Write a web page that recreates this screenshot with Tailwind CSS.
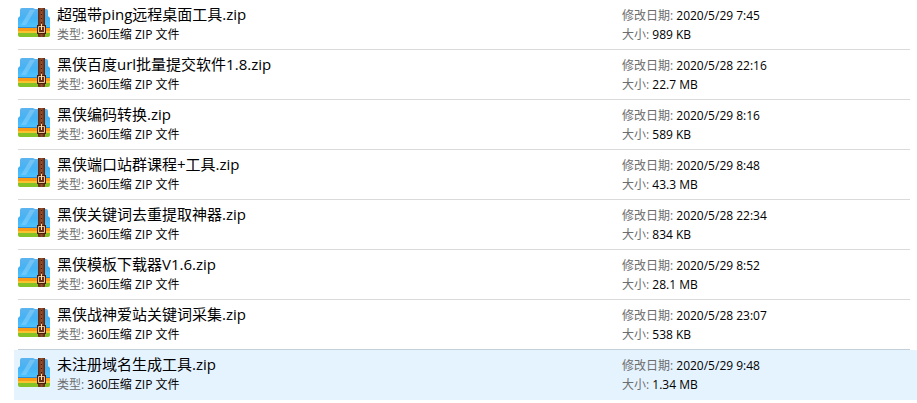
<!DOCTYPE html>
<html lang="zh-CN">
<head>
    <meta charset="UTF-8">
    <meta name="viewport" content="width=device-width, initial-scale=1.0">
    <title>文件</title>
    <script src="https://cdn.jsdelivr.net/npm/@tailwindcss/browser@4"></script>
</head>
<body class="bg-white text-black font-['Open_Sans','Noto_Sans_CJK_SC',sans-serif]">
    <!-- zip file icon -->
    <svg class="absolute size-0" aria-hidden="true">
        <defs>
            <linearGradient id="blue" x1="0" y1="0" x2="0" y2="1">
                <stop offset="0" stop-color="#5cb4ee" />
                <stop offset="0.5" stop-color="#45b2f4" />
                <stop offset="1" stop-color="#4cc4ff" />
            </linearGradient>
            <linearGradient id="strap" x1="0" y1="0" x2="1" y2="0">
                <stop offset="0" stop-color="#5c2812" />
                <stop offset="0.5" stop-color="#94502c" />
                <stop offset="1" stop-color="#5a2510" />
            </linearGradient>
        </defs>
        <symbol id="zip" viewBox="0 0 32 30">
            <path d="M0 22h32v5a2 2 0 0 1-2 2H2a2 2 0 0 1-2-2z" fill="#84c225" />
            <path d="M0 20h32v4H0z" fill="#fb9a14" />
            <path d="M0 23h32v2H0z" fill="#f6c42e" />
            <path d="M2 8V2a2 2 0 0 1 2-2h11l2 1h11a2 2 0 0 1 2 2v5l2 2v10H0V10z" fill="url(#blue)" />
            <path d="M3 17L12 2h5L8 17z" fill="#a4dcfb" opacity="0.4" />
            <path d="M0 19h32v1H0z" fill="#2b8fd8" />
            <path d="M20 0h7v28a1 1 0 0 1-1 1h-5a1 1 0 0 1-1-1z" fill="url(#strap)" />
            <path d="M23 2h1v1h-1zM23 6h1v1h-1zM23 10h1v1h-1zM23 14h1v1h-1z" fill="#3c1608" />
            <path d="M19 17h9v9h-9z" fill="#4a1d0c" />
            <path d="M20.500 18.500h6v6h-6z" fill="#6b3016" stroke="#ecc494" />
            <path d="M23 16h1v6h-1z" fill="#fbe3b8" />
        </symbol>
    </svg>

    <main>
        <ul class="pl-[14px]">
            <li class="pl-1 pr-[7px]">
                <div class="flex h-[50px] border-b border-[#dadada]">
                    <svg class="w-8 h-[30px] mt-2 mr-[7px] shrink-0"><use href="#zip" /></svg>
                    <div class="grow pt-[3px]">
                        <h2 class="text-[15px] leading-[22px]">超强带ping远程桌面工具.zip</h2>
                        <p class="text-[12px] leading-[20px]"><span class="text-[#6d6d6d]">类型:</span> 360压缩 ZIP 文件</p>
                    </div>
                    <div class="w-[288px] shrink-0 pt-[6px] text-[12px] leading-[19px]">
                        <p><span class="text-[#6d6d6d]">修改日期:</span> 2020/5/29 7:45</p>
                        <p><span class="text-[#6d6d6d]">大小:</span> 989 KB</p>
                    </div>
                </div>
            </li>
            <li class="pl-1 pr-[7px]">
                <div class="flex h-[50px] border-b border-[#dadada]">
                    <svg class="w-8 h-[30px] mt-2 mr-[7px] shrink-0"><use href="#zip" /></svg>
                    <div class="grow pt-[3px]">
                        <h2 class="text-[15px] leading-[22px]">黑侠百度url批量提交软件1.8.zip</h2>
                        <p class="text-[12px] leading-[20px]"><span class="text-[#6d6d6d]">类型:</span> 360压缩 ZIP 文件</p>
                    </div>
                    <div class="w-[288px] shrink-0 pt-[6px] text-[12px] leading-[19px]">
                        <p><span class="text-[#6d6d6d]">修改日期:</span> 2020/5/28 22:16</p>
                        <p><span class="text-[#6d6d6d]">大小:</span> 22.7 MB</p>
                    </div>
                </div>
            </li>
            <li class="pl-1 pr-[7px]">
                <div class="flex h-[50px] border-b border-[#dadada]">
                    <svg class="w-8 h-[30px] mt-2 mr-[7px] shrink-0"><use href="#zip" /></svg>
                    <div class="grow pt-[3px]">
                        <h2 class="text-[15px] leading-[22px]">黑侠编码转换.zip</h2>
                        <p class="text-[12px] leading-[20px]"><span class="text-[#6d6d6d]">类型:</span> 360压缩 ZIP 文件</p>
                    </div>
                    <div class="w-[288px] shrink-0 pt-[6px] text-[12px] leading-[19px]">
                        <p><span class="text-[#6d6d6d]">修改日期:</span> 2020/5/29 8:16</p>
                        <p><span class="text-[#6d6d6d]">大小:</span> 589 KB</p>
                    </div>
                </div>
            </li>
            <li class="pl-1 pr-[7px]">
                <div class="flex h-[50px] border-b border-[#dadada]">
                    <svg class="w-8 h-[30px] mt-2 mr-[7px] shrink-0"><use href="#zip" /></svg>
                    <div class="grow pt-[3px]">
                        <h2 class="text-[15px] leading-[22px]">黑侠端口站群课程+工具.zip</h2>
                        <p class="text-[12px] leading-[20px]"><span class="text-[#6d6d6d]">类型:</span> 360压缩 ZIP 文件</p>
                    </div>
                    <div class="w-[288px] shrink-0 pt-[6px] text-[12px] leading-[19px]">
                        <p><span class="text-[#6d6d6d]">修改日期:</span> 2020/5/29 8:48</p>
                        <p><span class="text-[#6d6d6d]">大小:</span> 43.3 MB</p>
                    </div>
                </div>
            </li>
            <li class="pl-1 pr-[7px]">
                <div class="flex h-[50px] border-b border-[#dadada]">
                    <svg class="w-8 h-[30px] mt-2 mr-[7px] shrink-0"><use href="#zip" /></svg>
                    <div class="grow pt-[3px]">
                        <h2 class="text-[15px] leading-[22px]">黑侠关键词去重提取神器.zip</h2>
                        <p class="text-[12px] leading-[20px]"><span class="text-[#6d6d6d]">类型:</span> 360压缩 ZIP 文件</p>
                    </div>
                    <div class="w-[288px] shrink-0 pt-[6px] text-[12px] leading-[19px]">
                        <p><span class="text-[#6d6d6d]">修改日期:</span> 2020/5/28 22:34</p>
                        <p><span class="text-[#6d6d6d]">大小:</span> 834 KB</p>
                    </div>
                </div>
            </li>
            <li class="pl-1 pr-[7px]">
                <div class="flex h-[50px] border-b border-[#dadada]">
                    <svg class="w-8 h-[30px] mt-2 mr-[7px] shrink-0"><use href="#zip" /></svg>
                    <div class="grow pt-[3px]">
                        <h2 class="text-[15px] leading-[22px]">黑侠模板下载器V1.6.zip</h2>
                        <p class="text-[12px] leading-[20px]"><span class="text-[#6d6d6d]">类型:</span> 360压缩 ZIP 文件</p>
                    </div>
                    <div class="w-[288px] shrink-0 pt-[6px] text-[12px] leading-[19px]">
                        <p><span class="text-[#6d6d6d]">修改日期:</span> 2020/5/29 8:52</p>
                        <p><span class="text-[#6d6d6d]">大小:</span> 28.1 MB</p>
                    </div>
                </div>
            </li>
            <li class="pl-1 pr-[7px]">
                <div class="flex h-[50px] border-b border-[#c3d0da]">
                    <svg class="w-8 h-[30px] mt-2 mr-[7px] shrink-0"><use href="#zip" /></svg>
                    <div class="grow pt-[3px]">
                        <h2 class="text-[15px] leading-[22px]">黑侠战神爱站关键词采集.zip</h2>
                        <p class="text-[12px] leading-[20px]"><span class="text-[#6d6d6d]">类型:</span> 360压缩 ZIP 文件</p>
                    </div>
                    <div class="w-[288px] shrink-0 pt-[6px] text-[12px] leading-[19px]">
                        <p><span class="text-[#6d6d6d]">修改日期:</span> 2020/5/28 23:07</p>
                        <p><span class="text-[#6d6d6d]">大小:</span> 538 KB</p>
                    </div>
                </div>
            </li>
            <!-- selected file -->
            <li class="pl-1 pr-[7px] bg-[#e5f3ff]">
                <div class="flex h-[50px]">
                    <svg class="w-8 h-[30px] mt-2 mr-[7px] shrink-0"><use href="#zip" /></svg>
                    <div class="grow pt-[3px]">
                        <h2 class="text-[15px] leading-[22px]">未注册域名生成工具.zip</h2>
                        <p class="text-[12px] leading-[20px]"><span class="text-[#6d6d6d]">类型:</span> 360压缩 ZIP 文件</p>
                    </div>
                    <div class="w-[288px] shrink-0 pt-[6px] text-[12px] leading-[19px]">
                        <p><span class="text-[#6d6d6d]">修改日期:</span> 2020/5/29 9:48</p>
                        <p><span class="text-[#6d6d6d]">大小:</span> 1.34 MB</p>
                    </div>
                </div>
            </li>
        </ul>
    </main>
</body>
</html>
